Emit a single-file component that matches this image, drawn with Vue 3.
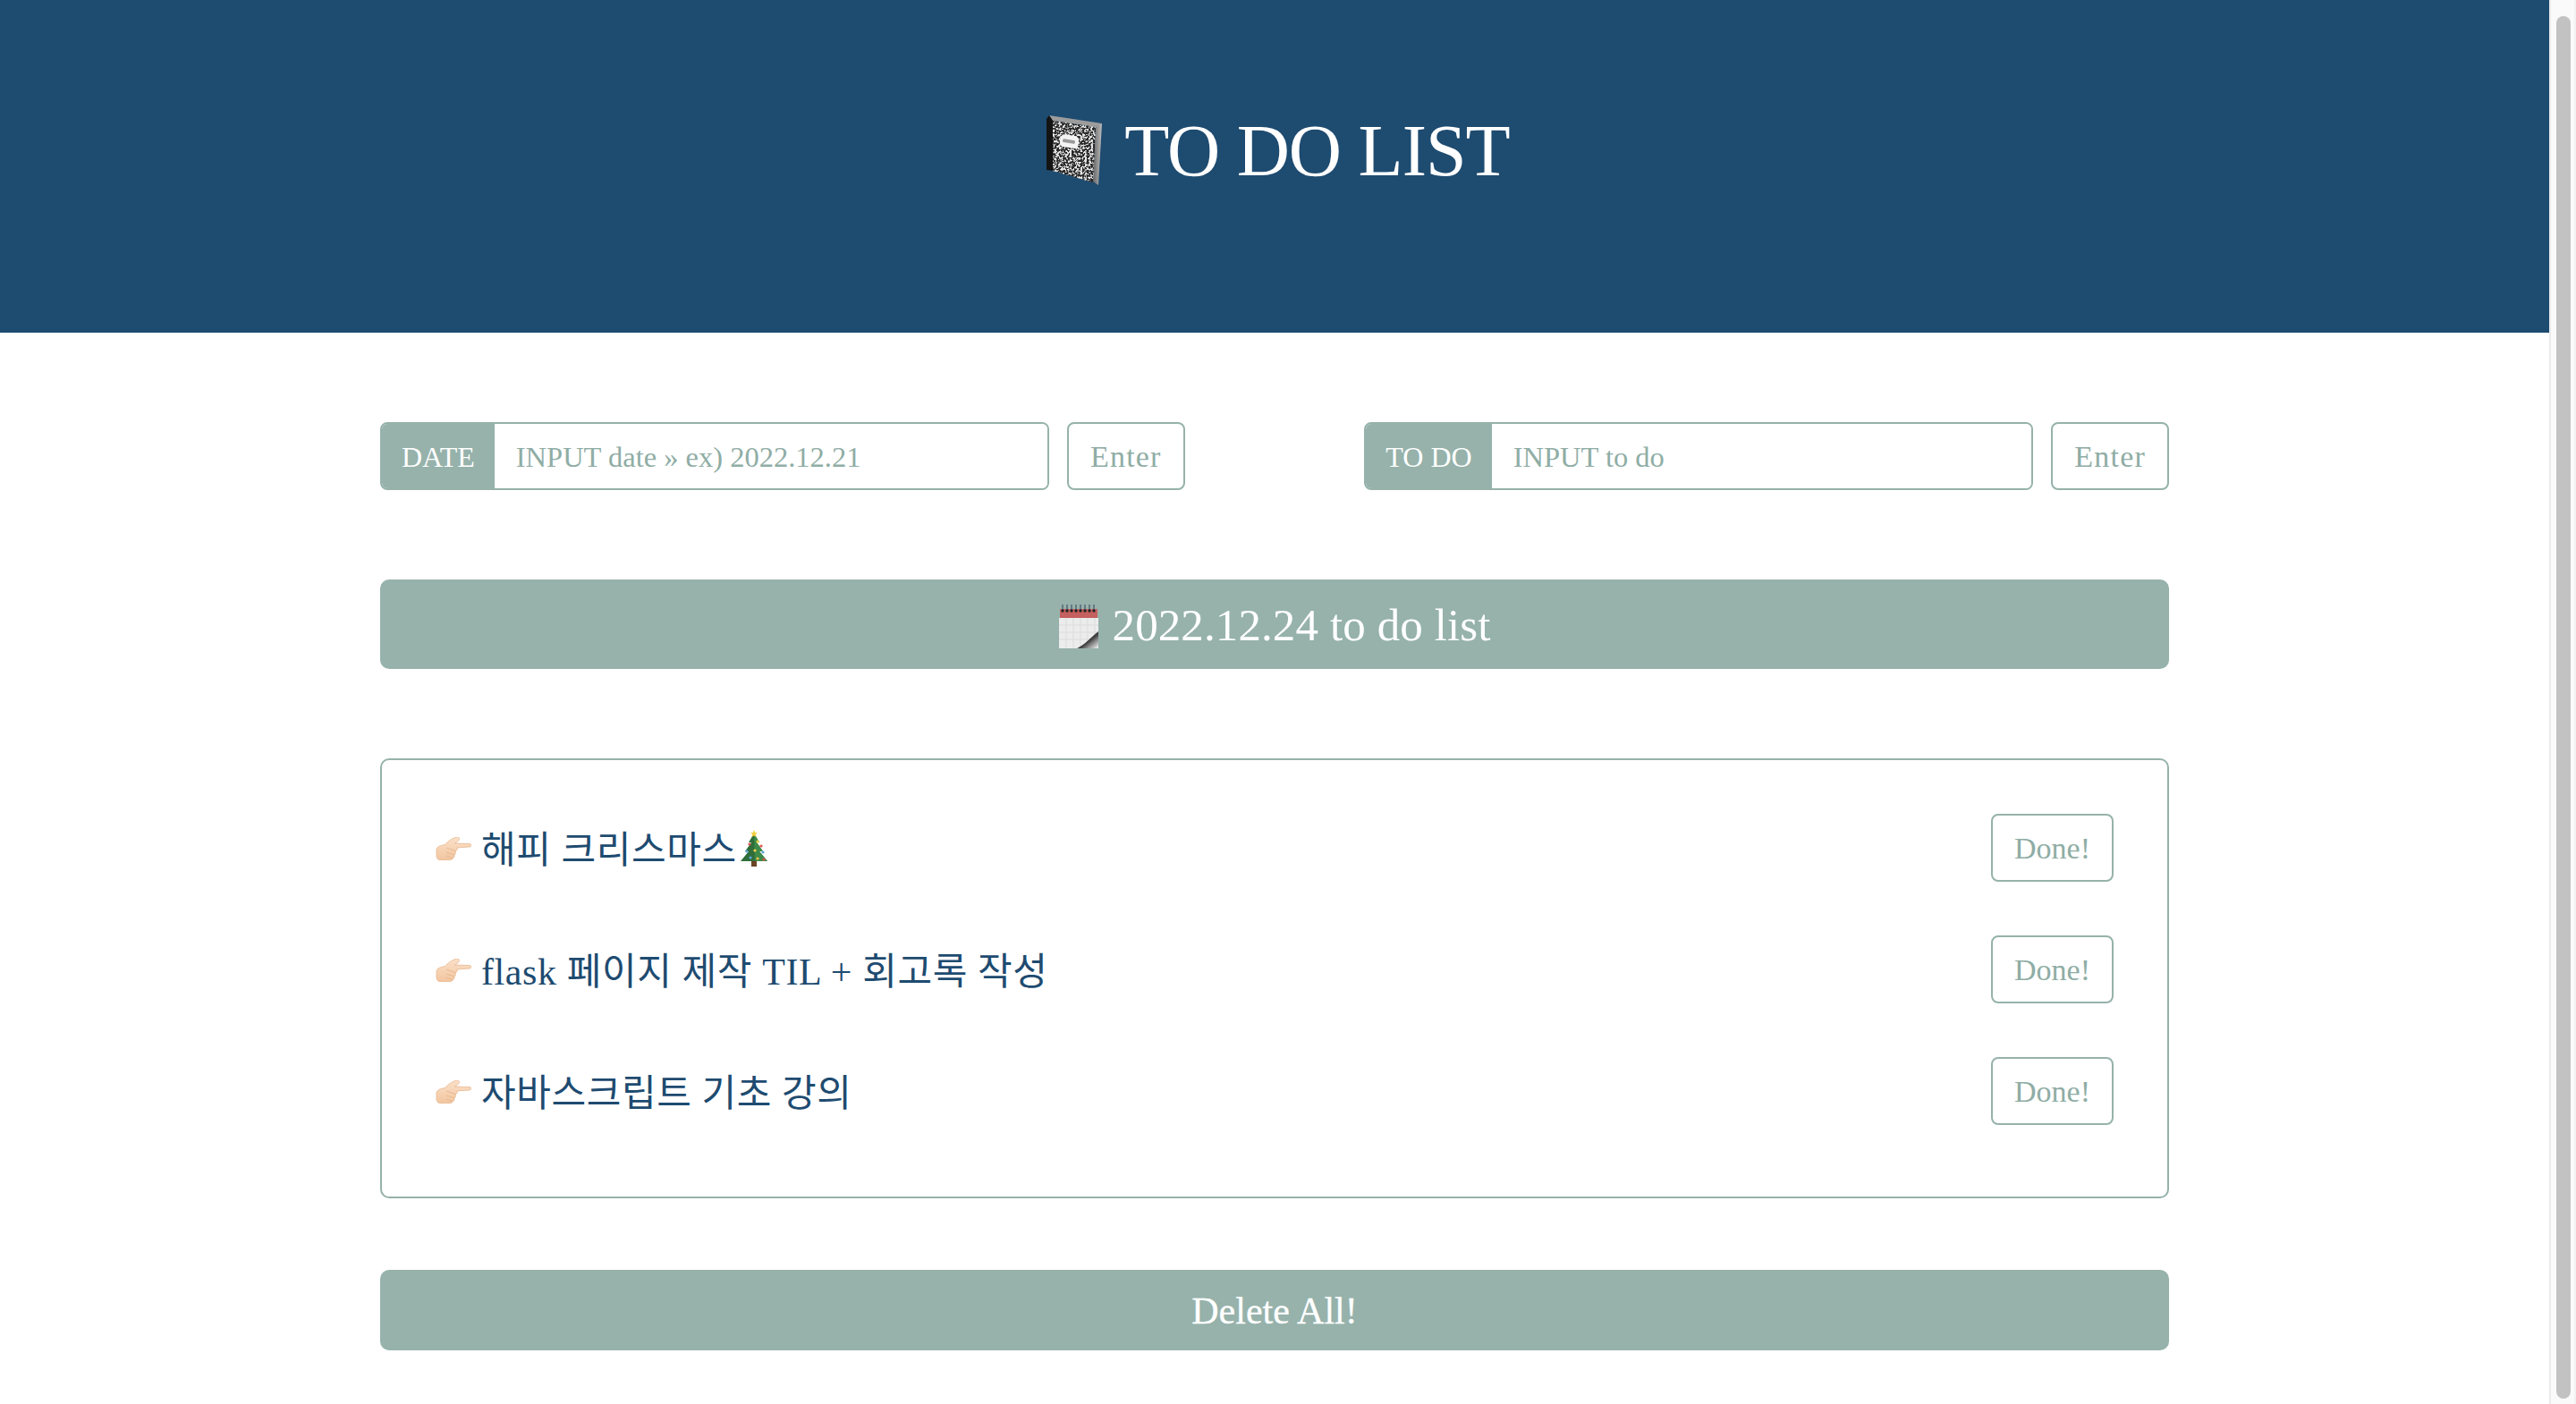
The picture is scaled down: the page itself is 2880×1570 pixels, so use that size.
<script setup>
import { ref } from 'vue'
const todos = ref(['해피 크리스마스', 'flask 페이지 제작 TIL + 회고록 작성', '자바스크립트 기초 강의'])
const rings = [5, 10, 15, 20, 25, 30, 35, 40]
const ornaments = [
  { x: 11, y: 16, c: '#d9534f' }, { x: 20, y: 13, c: '#f2d24b' }, { x: 24, y: 18, c: '#e2574c' },
  { x: 8, y: 24, c: '#5fa8d8' }, { x: 17, y: 23, c: '#f2d24b' }, { x: 26, y: 25, c: '#5fa8d8' },
  { x: 12, y: 31, c: '#5fa8d8' }, { x: 20, y: 32, c: '#f0c040' }, { x: 27, y: 33, c: '#d9534f' }
]
</script>
<template>
  <div class="page">
    <div class="content">
      <header class="hero">
        <h1>
          <svg class="ico-book" viewBox="0 0 62 79" role="img" aria-label="notebook">
            <defs>
              <filter id="marble2" x="0" y="0" width="100%" height="100%">
                <feTurbulence type="fractalNoise" baseFrequency="0.42" numOctaves="2" seed="11" />
                <feColorMatrix type="matrix" values="0 0 0 0 0.8  0 0 0 0 0.8  0 0 0 0 0.8  5 5 0 0 -4.8" />
                <feComposite in2="SourceGraphic" operator="in" result="spots" />
                <feMerge><feMergeNode in="SourceGraphic" /><feMergeNode in="spots" /></feMerge>
              </filter>
              <linearGradient id="edge" x1="0" y1="0" x2="1" y2="0">
                <stop offset="0" stop-color="#666" /><stop offset="1" stop-color="#bdbdbd" />
              </linearGradient>
              <linearGradient id="hand" x1="0" y1="0" x2="0" y2="1">
                <stop offset="0" stop-color="#fbe0c8" /><stop offset="1" stop-color="#f2c6a0" />
              </linearGradient>
            </defs>
            <polygon points="55,11 62,9 58,78 52,74" fill="url(#edge)" />
            <polygon points="3,0 62,9 55,13 7,6" fill="#9c9c9c" />
            <polygon points="7,6 55,13 52,75 7,62" fill="#2c2c2c" filter="url(#marble2)" />
            <polygon points="0,4 3,0 7,6 7,62 0,61" fill="#141414" />
            <rect x="15" y="22" width="21" height="14" rx="5" fill="#f4f4f4" transform="rotate(9 25 29)" />
            <rect x="18" y="27" width="14" height="4" rx="1.5" fill="#9a9a9a" transform="rotate(9 25 29)" />
          </svg>
          <span>TO DO LIST</span>
        </h1>
      </header>
      <main class="wrap">
        <section class="inputs">
          <div class="group">
            <div class="field"><span class="tag">DATE</span><input placeholder="INPUT date » ex) 2022.12.21" /></div>
            <button class="btn enter">Enter</button>
          </div>
          <div class="group">
            <div class="field"><span class="tag">TO DO</span><input placeholder="INPUT to do" /></div>
            <button class="btn enter">Enter</button>
          </div>
        </section>
        <h2 class="banner">
          <svg class="ico-cal" viewBox="0 0 44 50" role="img" aria-label="calendar">
            <defs>
              <linearGradient id="curl" x1="0" y1="0" x2="1" y2="1">
                <stop offset="0" stop-color="#ececec" /><stop offset="0.38" stop-color="#bdbdbd" /><stop offset="0.55" stop-color="#383838" /><stop offset="0.72" stop-color="#8a8a8a" /><stop offset="1" stop-color="#f5f5f5" />
              </linearGradient>
            </defs>
            <rect x="0" y="16" width="44" height="34" fill="#ececec" />
            <g stroke="#dcdcdc" stroke-width="1">
              <path d="M8 16V50M16 16V50M24 16V50M32 16V50M40 16V50M0 24H44M0 32H44M0 40H44" fill="none" />
            </g>
            <rect x="1" y="6" width="42" height="10" fill="#c4605f" />
            <g v-for="r in rings" :key="r">
              <line :x1="r - 1" y1="1" :x2="r - 1" y2="9" stroke="#5a6b78" stroke-width="1.6" />
              <circle :cx="r - 1" cy="8" r="1.7" fill="#222" />
            </g>
            <path d="M20 50 C30 45 35 38 44 31 L44 50 Z" fill="url(#curl)" />
          </svg>
          <span class="banner-text">2022.12.24 to do list</span>
        </h2>
        <section class="list">
          <div class="row" v-for="(t, i) in todos" :key="i">
            <span class="txt">
              <svg class="ico-hand" viewBox="0 0 40 26" role="img" aria-label="pointing hand">
                <path d="M1 14 C1 11 6 9 11 8.5 C13 5 19 1 24 0 C27 0 27.5 3 24.5 5 L21.5 7 L38 7.5 C40.5 8 40.5 10.5 38 11 L24 12 C24.8 14 23.5 15.5 22 15.8 C23 17.5 22 19.5 21 19.8 C21.5 21.5 20.5 23.5 19 23.8 C19 25 17 26 15 26 L7 26 C3 26 1 24 1 21 Z" fill="url(#hand)" stroke="#e3b18a" stroke-width="0.7" />
                <path d="M12 12 L22 15.5 M12 17 L21 19.8 M12 21 L19 23.8" stroke="#e3b18a" stroke-width="0.8" fill="none" />
              </svg>
              <span class="label">{{ t }}</span>
              <svg v-if="i === 0" class="ico-tree" viewBox="0 0 32 41" role="img" aria-label="christmas tree">
                <rect x="13" y="34" width="6" height="7" fill="#6b4426" />
                <polygon points="16,4 22,14 19,14 26,24 22,24 31,35 1,35 10,24 6,24 13,14 10,14" fill="#2f6d3a" />
                <polygon points="16,4 22,14 19,14 26,24 22,24 31,35 17,35" fill="#3d8a49" />
                <polygon points="16,0 17.2,3 20,3.2 17.8,5 18.6,8 16,6.4 13.4,8 14.2,5 12,3.2 14.8,3" fill="#f3cf3f" />
                <circle v-for="(o, k) in ornaments" :key="k" :cx="o.x" :cy="o.y" r="1.6" :fill="o.c" />
              </svg>
            </span>
            <button class="btn">Done!</button>
          </div>
        </section>
        <button class="del">Delete All!</button>
      </main>
    </div>
    <aside class="scrollbar"><div class="thumb"></div></aside>
  </div>
</template>
<style>
html, body { margin: 0; background: #fff; overflow: hidden; }
</style>
<style scoped>
.page { display: flex; height: 1570px; overflow: hidden; font-family: "Liberation Serif", "Noto Sans CJK KR", serif; }
.content { flex: 1; min-width: 0; }
.hero { height: 372px; background: #1e4b70; display: flex; justify-content: center; box-sizing: border-box; padding-top: 121px; }
h1 { margin: 0; color: #fff; font-size: 82px; font-weight: 400; letter-spacing: -1px; line-height: 96px; display: flex; align-items: center; height: 96px; gap: 25px; padding-left: 8px; }
.ico-book { width: 62px; height: 79px; margin-top: -2px; }
.wrap { width: 2000px; margin: 0 auto; padding-top: 100px; }
.inputs { display: flex; justify-content: space-between; }
.group { display: flex; gap: 20px; }
.field { display: flex; width: 748px; height: 76px; border: 2px solid #96b2ab; border-radius: 8px; box-sizing: border-box; overflow: hidden; }
.tag { background: #96b2ab; color: #fff; font-size: 32px; padding: 2px 22px 0; display: flex; align-items: center; }
input { flex: 1; border: 0; outline: 0; padding: 2px 24px 0; font: 32.5px "Liberation Serif", serif; min-width: 0; }
input::placeholder { color: #8fada5; }
.btn { height: 76px; padding: 2px 24px 0; background: #fff; border: 2px solid #96b2ab; border-radius: 8px; color: #8fada5; font: 34px "Liberation Serif", serif; }
.enter { letter-spacing: 1.2px; }
.banner { margin: 100px 0; height: 100px; background: #96b2ab; border-radius: 10px; color: #fff; font-size: 51px; font-weight: 400; display: flex; justify-content: center; align-items: center; gap: 16px; }
.banner-text { padding-top: 2px; letter-spacing: 0.1px; }
.ico-cal { width: 44px; height: 50px; margin-top: 4px; }
.list { border: 2px solid #96b2ab; border-radius: 10px; padding: 60px; box-sizing: border-box; height: 492px; display: flex; flex-direction: column; gap: 60px; }
.row { display: flex; justify-content: space-between; align-items: center; }
.txt { font-size: 42px; letter-spacing: 0.6px; color: #1e4b70; display: flex; align-items: center; }
.label { margin: -3px 0 0 11px; }
.ico-hand { width: 40px; height: 26px; margin-top: 2px; }
.ico-tree { width: 32px; height: 41px; margin-left: 3px; }
.del { display: block; width: 100%; height: 90px; margin-top: 80px; padding-top: 3px; background: #96b2ab; border: 0; border-radius: 10px; color: #fff; font: 42px "Liberation Serif", serif; -webkit-text-stroke: 0.3px #fff; }
.scrollbar { width: 30px; box-sizing: border-box; height: 100%; background: #fafafa; border-left: 2px solid #ebebeb; border-right: 2px solid #f2f2f2; padding: 18px 4px 6px 6px; }
.thumb { height: 100%; background: #c2c2c2; border-radius: 8px; }
</style>
